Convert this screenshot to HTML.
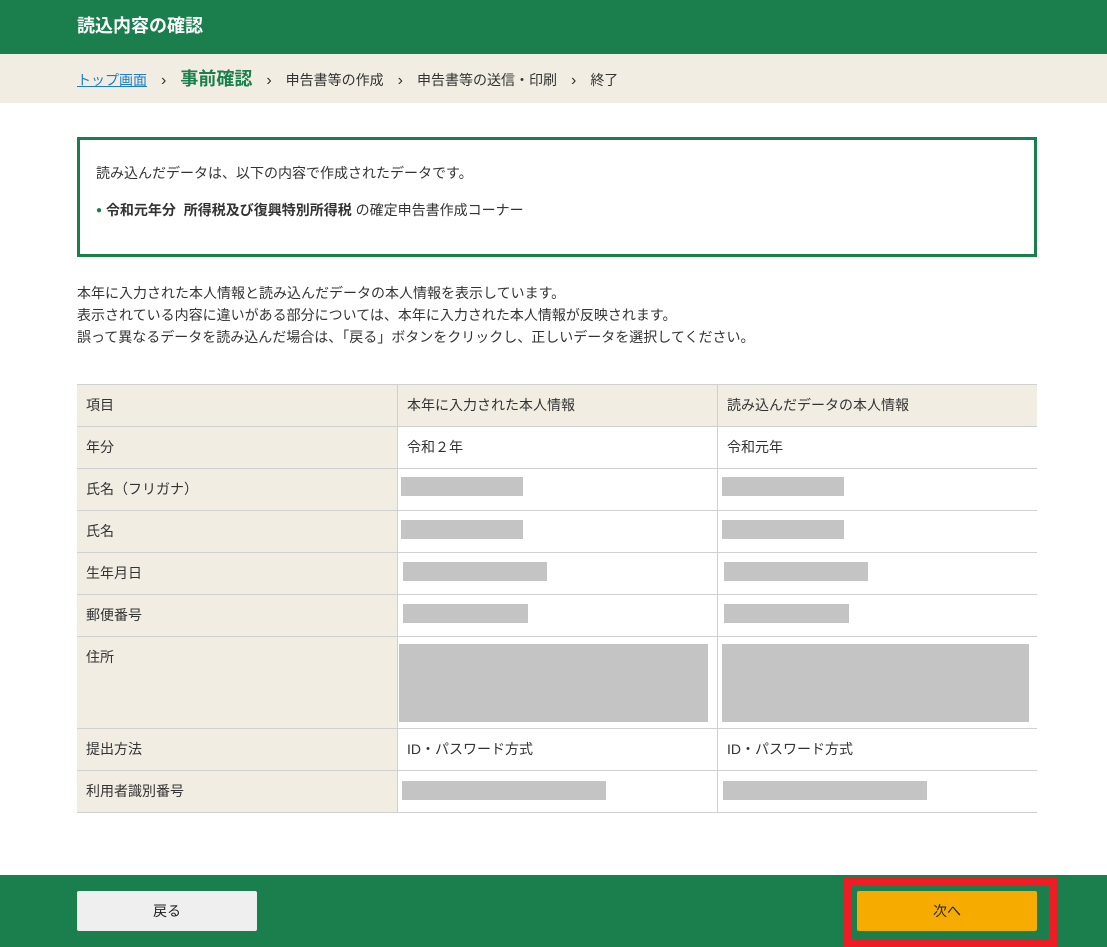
<!DOCTYPE html>
<html><head><meta charset="utf-8"><style>
*{margin:0;padding:0;box-sizing:border-box}
body{width:1107px;height:947px;position:relative;background:#fff;font-family:"Liberation Sans","Noto Sans CJK JP",sans-serif;color:#333;font-size:14px;overflow:hidden}
.abs{position:absolute}
.hdr{left:0;top:0;width:1107px;height:54px;background:#1a7f4d;color:#fff;font-weight:bold;font-size:18px;line-height:52px;padding-left:77px}
.bc{left:0;top:54px;width:1107px;height:49px;background:#f1ede3;font-size:14px;line-height:50px;padding-left:77px;white-space:nowrap}
.bc a{color:#1a7fc4;text-decoration:underline}
.bc .cur{color:#1a7f4d;font-weight:bold;font-size:18px}
.bc .s{margin:0 14px;font-size:16px}
.box{left:77px;top:137px;width:960px;height:120px;border:3px solid #1a7f4d;padding:23px 0 0 16px;font-size:14px}
.txt{left:77px;top:282px;font-size:14px;line-height:22px}
.row{position:absolute;left:77px;width:960px;border-bottom:1px solid #d0d0d0;font-size:14px}
.c{position:absolute;top:0;bottom:0;padding-left:9px;line-height:41px}
.c1{left:0;width:320px;background:#f1ede3}
.c2{left:320px;width:320px;border-left:1px solid #d0d0d0}
.c3{left:640px;width:320px;border-left:1px solid #d0d0d0}
.g{position:absolute;background:#c4c4c4}
.ft{left:0;top:875px;width:1107px;height:72px;background:#1a7f4d}
.btn{position:absolute;top:891px;width:180px;height:40px;text-align:center;line-height:40px;font-size:14px;border-radius:2px;color:#222}
</style></head><body>
<div class="abs hdr">読込内容の確認</div>
<div class="abs bc"><a>トップ画面</a><span class="s">›</span><span class="cur">事前確認</span><span class="s">›</span>申告書等の作成<span class="s">›</span>申告書等の送信・印刷<span class="s">›</span>終了</div>
<div class="abs box">読み込んだデータは、以下の内容で作成されたデータです。
<div style="margin-top:17px"><span style="color:#1a7f4d;font-size:10px;vertical-align:2px">●</span> <b>令和元年分&nbsp; 所得税及び復興特別所得税</b> の確定申告書作成コーナー</div></div>
<div class="abs txt">本年に入力された本人情報と読み込んだデータの本人情報を表示しています。<br>表示されている内容に違いがある部分については、本年に入力された本人情報が反映されます。<br>誤って異なるデータを読み込んだ場合は、「戻る」ボタンをクリックし、正しいデータを選択してください。</div>
<div class="row" style="top:384px;height:43px;border-top:1px solid #d0d0d0;background:#f1ede3"><div class="c c1">項目</div><div class="c c2" style="background:#f1ede3">本年に入力された本人情報</div><div class="c c3" style="background:#f1ede3">読み込んだデータの本人情報</div></div>
<div class="row" style="top:427px;height:42px"><div class="c c1">年分</div><div class="c c2">令和２年</div><div class="c c3">令和元年</div></div>
<div class="row" style="top:469px;height:42px"><div class="c c1">氏名（フリガナ）</div><div class="c c2"></div><div class="c c3"></div></div>
<div class="row" style="top:511px;height:42px"><div class="c c1">氏名</div><div class="c c2"></div><div class="c c3"></div></div>
<div class="row" style="top:553px;height:42px"><div class="c c1">生年月日</div><div class="c c2"></div><div class="c c3"></div></div>
<div class="row" style="top:595px;height:42px"><div class="c c1">郵便番号</div><div class="c c2"></div><div class="c c3"></div></div>
<div class="row" style="top:637px;height:92px"><div class="c c1">住所</div><div class="c c2"></div><div class="c c3"></div></div>
<div class="row" style="top:729px;height:42px"><div class="c c1">提出方法</div><div class="c c2">ID・パスワード方式</div><div class="c c3">ID・パスワード方式</div></div>
<div class="row" style="top:771px;height:42px"><div class="c c1">利用者識別番号</div><div class="c c2"></div><div class="c c3"></div></div>
<div class="g" style="left:401px;top:477px;width:122px;height:19px"></div>
<div class="g" style="left:722px;top:477px;width:122px;height:19px"></div>
<div class="g" style="left:401px;top:520px;width:122px;height:19px"></div>
<div class="g" style="left:722px;top:520px;width:122px;height:19px"></div>
<div class="g" style="left:403px;top:562px;width:144px;height:19px"></div>
<div class="g" style="left:724px;top:562px;width:144px;height:19px"></div>
<div class="g" style="left:403px;top:604px;width:125px;height:19px"></div>
<div class="g" style="left:724px;top:604px;width:125px;height:19px"></div>
<div class="g" style="left:399px;top:644px;width:309px;height:78px"></div>
<div class="g" style="left:722px;top:644px;width:307px;height:78px"></div>
<div class="g" style="left:402px;top:781px;width:204px;height:19px"></div>
<div class="g" style="left:723px;top:781px;width:204px;height:19px"></div>
<div class="abs ft"></div>
<div class="btn" style="left:77px;background:#efefef">戻る</div>
<div class="abs" style="left:843px;top:878px;width:214px;height:69px;border:8px solid #ee1c25"></div>
<div class="btn" style="left:857px;background:#f5ab00">次へ</div>
</body></html>
